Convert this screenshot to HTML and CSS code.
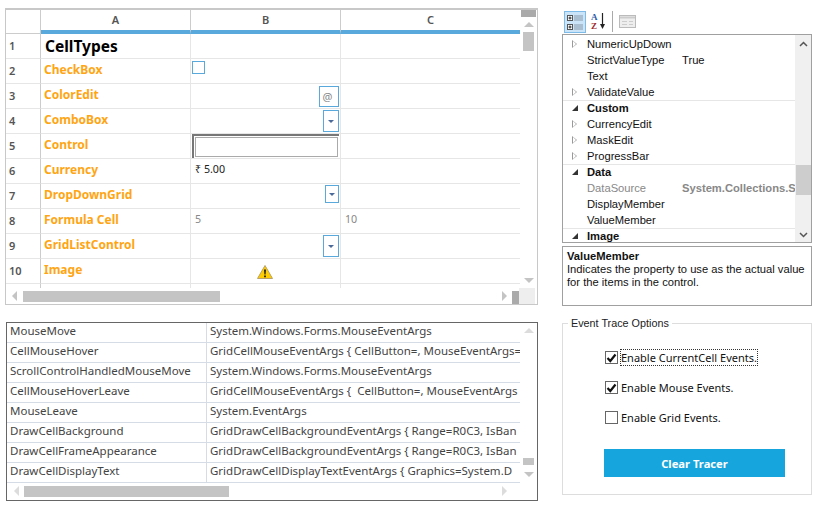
FILE: index.html
```html
<!DOCTYPE html>
<html lang="en">

<head>
    <meta charset="UTF-8">
    <title>Cell Types</title>
    <link rel="stylesheet" href="styles.css">
</head>

<body>
    <div class="page">

        <div class="left">
            <div class="grid-panel">
                <div class="grid-main">
                    <div class="cells">
                        <div class="corner"></div>
                        <div class="col-head">A</div>
                        <div class="col-head">B</div>
                        <div class="col-head last">C</div>

                        <div class="row-head">1</div>
                        <div class="cell title">CellTypes</div>
                        <div class="cell"></div>
                        <div class="cell last"></div>

                        <div class="row-head">2</div>
                        <div class="cell name">CheckBox</div>
                        <div class="cell top"><span class="cell-check"></span></div>
                        <div class="cell last"></div>

                        <div class="row-head">3</div>
                        <div class="cell name">ColorEdit</div>
                        <div class="cell end"><span class="cell-btn at">@</span></div>
                        <div class="cell last"></div>

                        <div class="row-head">4</div>
                        <div class="cell name">ComboBox</div>
                        <div class="cell end"><span class="cell-btn drop"><i class="caret"></i></span></div>
                        <div class="cell last"></div>

                        <div class="row-head">5</div>
                        <div class="cell name">Control</div>
                        <div class="cell"><span class="cell-input"></span></div>
                        <div class="cell last"></div>

                        <div class="row-head">6</div>
                        <div class="cell name">Currency</div>
                        <div class="cell text">₹ 5.00</div>
                        <div class="cell last"></div>

                        <div class="row-head">7</div>
                        <div class="cell name">DropDownGrid</div>
                        <div class="cell end"><span class="cell-btn small"><i class="caret"></i></span></div>
                        <div class="cell last"></div>

                        <div class="row-head">8</div>
                        <div class="cell name">Formula Cell</div>
                        <div class="cell text muted">5</div>
                        <div class="cell last text muted">10</div>

                        <div class="row-head">9</div>
                        <div class="cell name">GridListControl</div>
                        <div class="cell end"><span class="cell-btn drop"><i class="caret"></i></span></div>
                        <div class="cell last"></div>

                        <div class="row-head">10</div>
                        <div class="cell name">Image</div>
                        <div class="cell center">
                            <svg width="16" height="14" viewBox="0 0 16 14">
                                <path d="M8 .5 15.5 13.5H.5Z" fill="#fc0" stroke="#b8a26a" />
                                <path d="M7 4.500H9L8.600 9.500H7.400ZM7.100 10.500H8.900V12.300H7.100Z" fill="#222" />
                            </svg>
                        </div>
                        <div class="cell last"></div>

                        <div class="stub-head"></div>
                        <div class="stub"></div>
                        <div class="stub"></div>
                        <div></div>
                    </div>
                    <div class="vscroll grid-v">
                        <div class="v-cap"></div>
                        <i class="arrow-up"></i>
                        <div class="v-thumb"></div>
                        <i class="arrow-down"></i>
                    </div>
                </div>
                <div class="hscroll">
                    <i class="arrow-left"></i>
                    <div class="h-thumb grid-thumb"></div>
                    <i class="arrow-right"></i>
                    <div class="h-cap"></div>
                    <div class="h-corner"></div>
                </div>
            </div>

            <div class="log-panel">
                <div class="log-main">
                    <div class="log-rows">
                        <div class="log-row"><span>MouseMove</span><span>System.Windows.Forms.MouseEventArgs</span></div>
                        <div class="log-row"><span>CellMouseHover</span><span>GridCellMouseEventArgs { CellButton=, MouseEventArgs=</span></div>
                        <div class="log-row"><span>ScrollControlHandledMouseMove</span><span>System.Windows.Forms.MouseEventArgs</span></div>
                        <div class="log-row"><span>CellMouseHoverLeave</span><span>GridCellMouseEventArgs {&nbsp; CellButton=, MouseEventArgs</span></div>
                        <div class="log-row"><span>MouseLeave</span><span>System.EventArgs</span></div>
                        <div class="log-row"><span>DrawCellBackground</span><span>GridDrawCellBackgroundEventArgs { Range=R0C3, IsBan</span></div>
                        <div class="log-row"><span>DrawCellFrameAppearance</span><span>GridDrawCellBackgroundEventArgs { Range=R0C3, IsBan</span></div>
                        <div class="log-row"><span>DrawCellDisplayText</span><span>GridDrawCellDisplayTextEventArgs { Graphics=System.D</span></div>
                    </div>
                    <div class="vscroll log-v">
                        <i class="arrow-up pale"></i>
                        <div class="v-thumb"></div>
                        <i class="arrow-down"></i>
                    </div>
                </div>
                <div class="hscroll log-h">
                    <i class="arrow-left pale"></i>
                    <div class="h-thumb log-thumb"></div>
                    <i class="arrow-right pale"></i>
                </div>
            </div>
        </div>

        <div class="right">
            <div class="toolbar">
                <span class="tool selected">
                    <svg width="20" height="20" viewBox="0 0 20 20">
                        <g fill="#fff" stroke="#555">
                            <rect x="2.500" y="3.500" width="5" height="5" />
                            <rect x="2.500" y="12.500" width="5" height="5" />
                        </g>
                        <path d="M3.500 6H6.500M5 4.500V7.500M3.500 15H6.500M5 13.500V16.500" stroke="#222" />
                        <path d="M9 4H18M9 6H18M9 8H18M9 13H18M9 15H18M9 17H18" stroke="#8899aa" />
                    </svg>
                </span>
                <span class="tool">
                    <svg width="20" height="22" viewBox="0 0 20 22">
                        <text x="1" y="9" class="az az-a">A</text>
                        <text x="1" y="17.500" class="az az-z">Z</text>
                        <path d="M12.500 2V14" stroke="#222" stroke-width="1.200" />
                        <path d="M10 13 12.500 18 15 13Z" fill="#222" />
                    </svg>
                </span>
                <span class="tool-sep"></span>
                <span class="tool">
                    <svg width="17" height="13" viewBox="0 0 17 13">
                        <rect x=".5" y=".5" width="16" height="12" fill="#eee" stroke="#bbb" />
                        <path d="M1 2.500H16" stroke="#ccc" stroke-width="2" />
                        <path d="M3 6.500H8M3 9.500H8M10 6.500H14M10 9.500H14" stroke="#ccc" />
                    </svg>
                </span>
            </div>

            <div class="prop-list">
                <div class="prop-rows">
                    <div class="prop"><i class="tri-open"></i><span class="prop-name">NumericUpDown</span></div>
                    <div class="prop"><i></i><span class="prop-name">StrictValueType</span><span>True</span></div>
                    <div class="prop"><i></i><span class="prop-name">Text</span></div>
                    <div class="prop"><i class="tri-open"></i><span class="prop-name">ValidateValue</span></div>
                    <div class="prop cat"><i class="tri-down"></i><span class="prop-name">Custom</span></div>
                    <div class="prop"><i class="tri-open"></i><span class="prop-name">CurrencyEdit</span></div>
                    <div class="prop"><i class="tri-open"></i><span class="prop-name">MaskEdit</span></div>
                    <div class="prop"><i class="tri-open"></i><span class="prop-name">ProgressBar</span></div>
                    <div class="prop cat"><i class="tri-down"></i><span class="prop-name">Data</span></div>
                    <div class="prop readonly"><i></i><span class="prop-name">DataSource</span><b>System.Collections.S</b></div>
                    <div class="prop"><i></i><span class="prop-name">DisplayMember</span></div>
                    <div class="prop"><i></i><span class="prop-name">ValueMember</span></div>
                    <div class="prop cat"><i class="tri-down"></i><span class="prop-name">Image</span></div>
                </div>
                <div class="prop-scroll">
                    <svg class="chev" width="9" height="6" viewBox="0 0 9 6"><path d="M1 5 4.500 1.500 8 5" fill="none" stroke="#555" stroke-width="1.500" /></svg>
                    <div class="prop-thumb"></div>
                    <svg class="chev" width="9" height="6" viewBox="0 0 9 6"><path d="M1 1 4.500 4.500 8 1" fill="none" stroke="#555" stroke-width="1.500" /></svg>
                </div>
            </div>

            <div class="prop-desc">
                <strong>ValueMember</strong>
                <p>Indicates the property to use as the actual value for the items in the control.</p>
            </div>

            <fieldset class="options">
                <legend>Event Trace Options</legend>
                <div class="option-list">
                    <label class="option"><span class="box"><svg width="11" height="10" viewBox="0 0 11 10"><path d="M1.500 5 4.300 8 9.500 1.500" fill="none" stroke="#111" stroke-width="2.200" /></svg></span><span class="focused">Enable CurrentCell Events.</span></label>
                    <label class="option"><span class="box"><svg width="11" height="10" viewBox="0 0 11 10"><path d="M1.500 5 4.300 8 9.500 1.500" fill="none" stroke="#111" stroke-width="2.200" /></svg></span><span>Enable Mouse Events.</span></label>
                    <label class="option"><span class="box"></span><span>Enable Grid Events.</span></label>
                </div>
                <button class="clear-btn">Clear Tracer</button>
            </fieldset>
        </div>

    </div>
</body>

</html>
```

FILE: styles.css
```css
* {
    box-sizing: border-box;
}

body {
    margin: 0;
    background: #fff;
    font-family: "Noto Sans", sans-serif;
    font-size: 12px;
    color: #333;
    overflow: hidden;
}

i {
    display: block;
}

.page {
    display: flex;
    padding: 8px 0 0 5px;
}

.left {
    width: 533px;
    margin-right: 24px;
}

/* top grid */
.grid-panel {
    border: 1px solid #c8c8c8;
    border-top-width: 2px;
    height: 297px;
}

.grid-main {
    display: flex;
    height: 278px;
}

.cells {
    display: grid;
    grid-template-columns: 35px 150px 150px 179px;
    grid-template-rows: 24px repeat(10, 25px) 4px;
    width: 514px;
}

.corner {
    border-right: 1px solid #ccc;
    border-bottom: 1px solid #ccc;
}

.col-head {
    border-right: 1px solid #ccc;
    border-bottom: 4px solid #5aa9dd;
    text-align: center;
    font-weight: 600;
    font-size: 11px;
    line-height: 19px;
    color: #555;
}

.col-head.last {
    border-right: none;
}

.row-head {
    border-right: 1px solid #ccc;
    border-bottom: 1px solid #e6e6e6;
    padding: 4px 0 0 3px;
    font-weight: 600;
    font-size: 11px;
    color: #555;
}

.cell {
    border-right: 1px solid #e6e6e6;
    border-bottom: 1px solid #e6e6e6;
    display: flex;
    align-items: center;
}

.cell.last {
    border-right: none;
}

.title {
    font-weight: 700;
    font-size: 15.500px;
    color: #000;
    padding: 0 0 1px 4px;
}

.name {
    font-weight: 700;
    color: #ffa512;
    padding: 0 0 3px 3px;
}

.text {
    font-size: 10.700px;
    color: #222;
    padding: 0 0 5px 4px;
}

.muted {
    color: #888;
}

.top {
    align-items: flex-start;
    padding: 2px 0 0 1px;
}

.end {
    justify-content: flex-end;
    padding-right: 1px;
}

.center {
    justify-content: center;
    padding: 2px 2px 0 0;
}

.cell-check {
    width: 13px;
    height: 13px;
    border: 1px solid #5aa9dd;
}

.cell-btn {
    display: flex;
    align-items: center;
    justify-content: center;
    border: 1px solid #5aa9dd;
}

.cell-btn.at {
    width: 20px;
    height: 21px;
    padding-right: 3px;
    font-size: 11px;
    color: #888;
}

.cell-btn.drop {
    width: 16px;
    height: 22px;
}

.cell-btn.small {
    width: 14px;
    height: 18px;
    margin-bottom: 4px;
}

.caret {
    border-top: 3px solid #4a6a9a;
    border-left: 3px solid transparent;
    border-right: 3px solid transparent;
}

.cell-input {
    width: 147px;
    height: 24px;
    margin-left: 1px;
    border-top: 2px solid #777;
    border-left: 2px solid #777;
    background: #fff;
    box-shadow: inset 0 0 0 1px #fff, inset 0 0 0 2px #aaa;
}

.stub-head {
    border-right: 1px solid #ccc;
}

.stub {
    border-right: 1px solid #e6e6e6;
}

.vscroll {
    width: 17px;
    display: flex;
    flex-direction: column;
    align-items: center;
}

.grid-v .v-cap {
    width: 15px;
    height: 7px;
    background: #aaa;
    margin-bottom: 5px;
}

.v-thumb {
    width: 11px;
    background: #c4c4c4;
}

.grid-v .v-thumb {
    height: 19px;
    margin-top: 5px;
}

.grid-v .arrow-down {
    margin-top: auto;
    margin-bottom: 5px;
}

.arrow-up {
    border-bottom: 5px solid #c4c4c4;
    border-left: 5px solid transparent;
    border-right: 5px solid transparent;
}

.arrow-down {
    border-top: 5px solid #c4c4c4;
    border-left: 5px solid transparent;
    border-right: 5px solid transparent;
}

.arrow-left {
    border-right: 5px solid #c4c4c4;
    border-top: 5px solid transparent;
    border-bottom: 5px solid transparent;
}

.arrow-right {
    border-left: 5px solid #c4c4c4;
    border-top: 5px solid transparent;
    border-bottom: 5px solid transparent;
}

.arrow-up.pale {
    border-bottom-color: #dcdcdc;
}

.arrow-left.pale {
    border-right-color: #dcdcdc;
}

.arrow-right.pale {
    border-left-color: #dcdcdc;
}

.hscroll {
    display: flex;
    align-items: center;
    height: 16px;
    padding-left: 6px;
}

.h-thumb {
    height: 11px;
    background: #c4c4c4;
    margin-left: 6px;
}

.grid-thumb {
    width: 197px;
    margin-right: 282px;
}

.h-cap {
    width: 7px;
    height: 13px;
    align-self: flex-end;
    background: #aaa;
    margin-left: 5px;
}

.h-corner {
    width: 16px;
    height: 100%;
    background: #eee;
}

/* event log */
.log-panel {
    margin: 17px 0 0 1px;
    border: 1px solid #666;
    height: 179px;
}

.log-main {
    display: flex;
    height: 160px;
}

.log-rows {
    width: 513px;
}

.log-row {
    display: grid;
    grid-template-columns: 200px 313px;
    height: 20px;
    border-bottom: 1px solid #d5dce6;
    font-size: 11.500px;
    line-height: 16px;
    color: #444;
    white-space: nowrap;
}

.log-row span {
    overflow: hidden;
    padding-left: 3px;
}

.log-row span:first-child {
    border-right: 1px solid #d5dce6;
}

.log-v .arrow-up {
    margin-top: 5px;
}

.log-v .v-thumb {
    height: 7px;
    margin-top: auto;
}

.log-v .arrow-down {
    margin: 7px 0 6px;
}

.log-h {
    padding-left: 7px;
}

.log-h .h-thumb {
    margin-left: 5px;
}

.log-thumb {
    width: 205px;
    margin-right: 273px;
}

/* property grid */
.right {
    width: 250px;
}

.toolbar {
    display: flex;
    align-items: center;
    height: 23px;
    margin: 2px 0 1px 2px;
}

.tool {
    display: flex;
    align-items: center;
    justify-content: center;
    width: 22px;
    height: 22px;
}

.tool.selected {
    background: #cce4f7;
    border: 1px solid #7fbbe8;
    margin-right: 3px;
}

.tool-sep {
    width: 1px;
    height: 21px;
    background: #aaa;
    margin: 0 3px 0 1px;
}

.az {
    font-family: "Liberation Serif", serif;
    font-size: 9px;
    font-weight: 700;
}

.az-a {
    fill: #2a5ca8;
}

.az-z {
    fill: #a02a2a;
}

.prop-list {
    display: flex;
    height: 209px;
    border: 1px solid #a0a0a0;
    overflow: hidden;
    font-family: "Liberation Sans", sans-serif;
    font-size: 11.200px;
    color: #111;
}

.prop-rows {
    width: 232px;
    padding-top: 1px;
}

.prop {
    display: flex;
    align-items: center;
    height: 16px;
    white-space: nowrap;
    overflow: hidden;
}

.prop i {
    width: 24px;
    flex: none;
    padding-left: 9px;
}

.prop-name {
    width: 95px;
    flex: none;
}

.cat {
    font-weight: 700;
    box-shadow: inset 0 1px 0 #e6e6e6;
}

.readonly {
    color: #888;
}

.tri-open::before,
.tri-open::after {
    content: "";
    display: block;
    width: 0;
    border-top: 4px solid transparent;
    border-bottom: 4px solid transparent;
    border-left: 5px solid #999;
}

/* white inner triangle leaves only the outline */
.tri-open::after {
    margin-top: -7px;
    border-top-width: 3px;
    border-bottom-width: 3px;
    border-left: 3px solid #fff;
    margin-bottom: 1px;
    margin-left: 1px;
}

.tri-down::before {
    content: "";
    display: block;
    width: 0;
    border-bottom: 6px solid #333;
    border-left: 6px solid transparent;
}

.prop-scroll {
    width: 16px;
    background: #f0f0f0;
    display: flex;
    flex-direction: column;
    align-items: center;
    padding: 6px 0 4px;
}

.prop-thumb {
    width: 15px;
    height: 30px;
    background: #cdcdcd;
    margin: 118px 0 auto;
}

.prop-desc {
    height: 60px;
    margin-top: 3px;
    border: 1px solid #a0a0a0;
    padding: 3px 4px;
    font-family: "Liberation Sans", sans-serif;
    font-size: 11.200px;
    line-height: 13px;
    color: #111;
}

.prop-desc strong {
    display: block;
}

.prop-desc p {
    margin: 0;
}

/* options */
.options {
    height: 178px;
    margin: 11px 0 0;
    padding: 0;
    border: 1px solid #ddd;
}

.options legend {
    margin-left: 5px;
    padding: 0 3px;
    font-family: "Liberation Sans", sans-serif;
    font-size: 10.800px;
    color: #222;
}

.option-list {
    display: flex;
    flex-direction: column;
    gap: 13px;
    padding: 20px 0 0 42px;
}

.option {
    display: flex;
    align-items: center;
    gap: 3px;
    height: 17px;
    font-size: 11px;
    color: #111;
}

.box {
    display: flex;
    align-items: center;
    justify-content: center;
    width: 13px;
    height: 13px;
    border: 1px solid #666;
}

.focused {
    outline: 1px dotted #333;
}

.clear-btn {
    display: block;
    width: 181px;
    height: 28px;
    margin: 23px 0 0 41px;
    border: none;
    background: #17a5de;
    color: #fff;
    font: 700 11.200px "Noto Sans", sans-serif;
}
```
